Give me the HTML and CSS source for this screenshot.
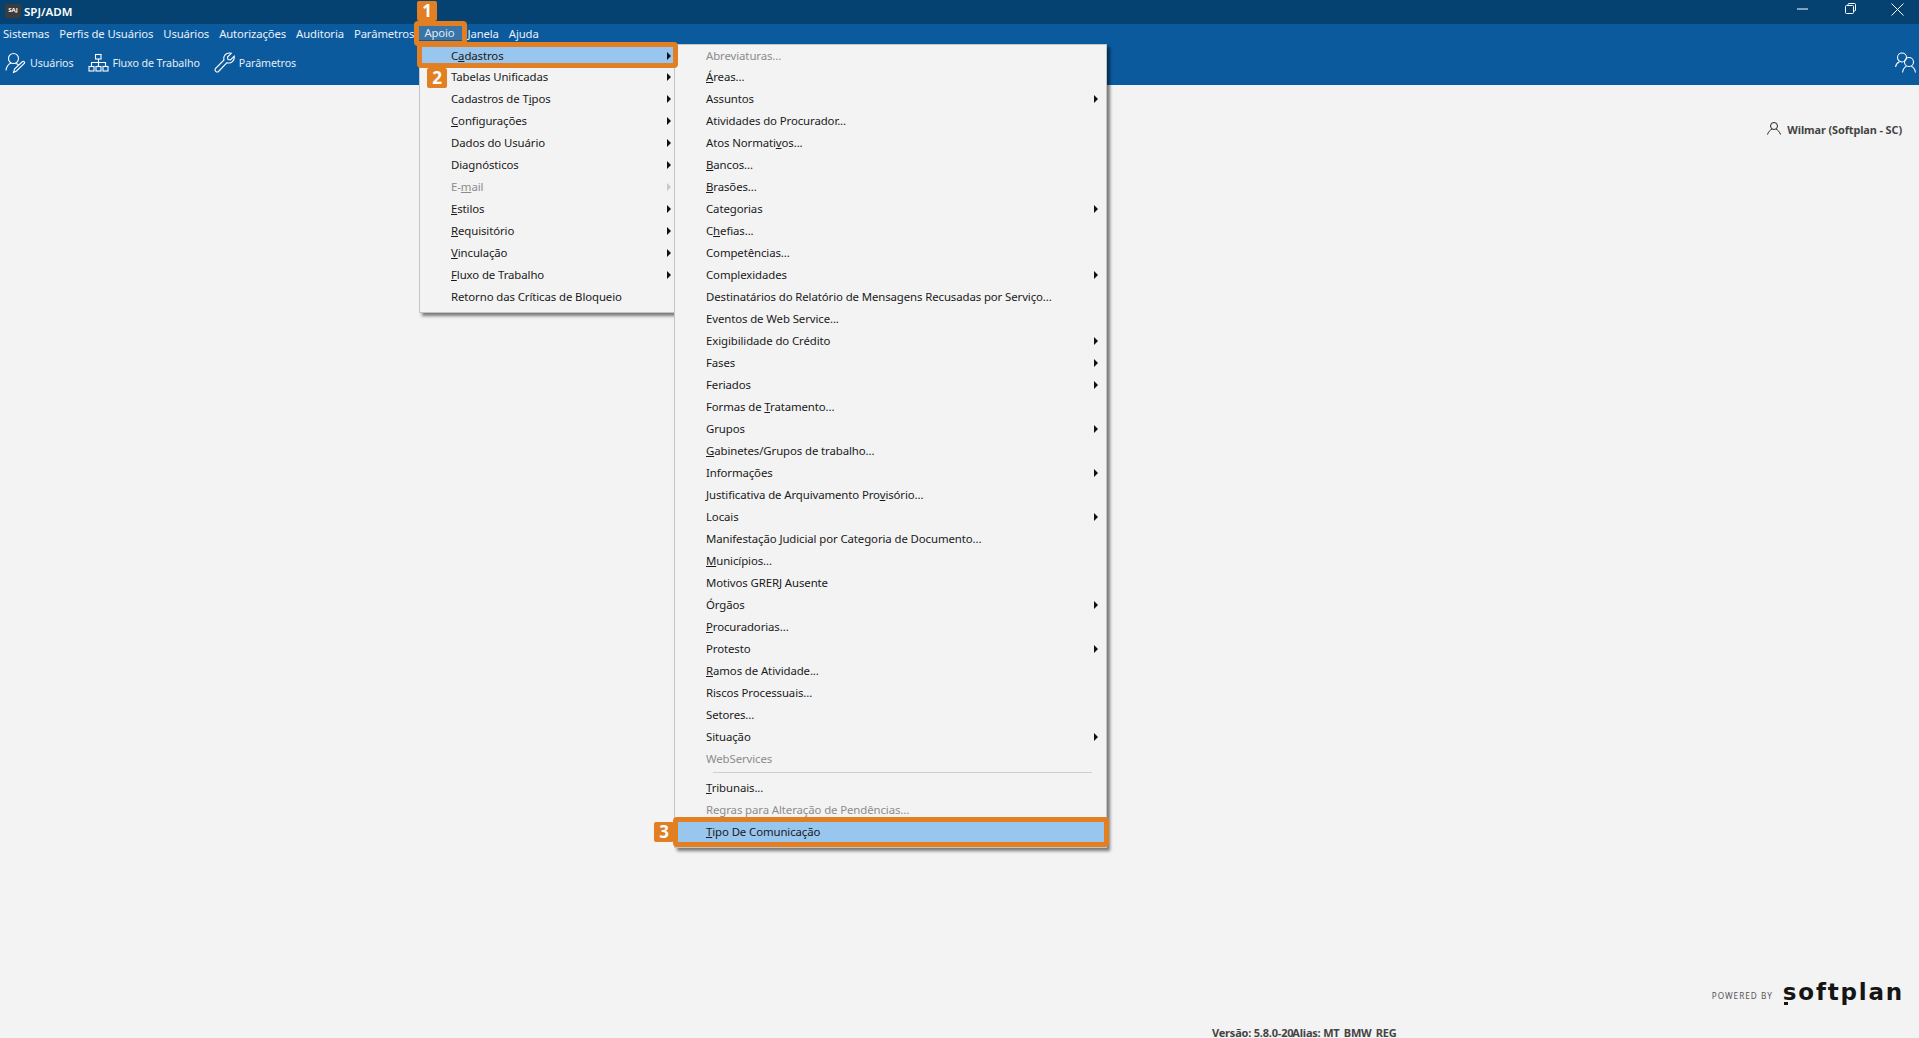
FILE: index.html
```html
<!DOCTYPE html>
<html lang="pt-BR">
<head>
<meta charset="utf-8">
<title>SPJ/ADM</title>
<link rel="stylesheet" href="styles.css">
</head>
<body>
<div class="app">
  <header class="titlebar">
    <div class="brand"><span class="saj">SAJ</span><span class="app-name">SPJ/ADM</span></div>
    <div class="winctl">
      <svg class="wc-min" width="11" height="2" viewBox="0 0 11 2"><path d="M0 1h11" stroke="#fff"/></svg>
      <svg class="wc-res" width="11" height="11" viewBox="0 0 11 11" fill="none" stroke="#fff"><rect x=".5" y="2.5" width="8" height="8" rx="1"/><path d="M3 2.5V1.500a1 1 0 0 1 1-1h5.500a1 1 0 0 1 1 1V7a1 1 0 0 1-1 1h-1"/></svg>
      <svg class="wc-close" width="13" height="13" viewBox="0 0 13 13" fill="none" stroke="#fff"><path d="M.5.5l12 12M12.500.5l-12 12"/></svg>
    </div>
  </header>
  <div class="band">
    <nav class="menubar">
      <span>Sistemas</span><span>Perfis de Usuários</span><span>Usuários</span><span>Autorizações</span><span>Auditoria</span><span>Parâmetros</span><span class="hover">Apoio</span><span>Janela</span><span>Ajuda</span>
    </nav>
    <div class="toolbar">
      <div class="tool">
        <svg width="21" height="21" viewBox="0 0 21 21" fill="none" stroke="#fff" stroke-width="1.100"><circle cx="8.500" cy="6.500" r="5"/><path d="M1 18.500c.5-4 2.500-6.500 5-7.500M10.500 11.500c1.500.2 2.500.8 3 1.500"/><path d="M8.500 20.500l1-3.500 8-7.500c1-.8 2.700.8 1.800 2l-7.800 7.500z"/></svg>
        <span>Usuários</span>
      </div>
      <div class="tool">
        <svg width="21" height="21" viewBox="0 0 21 21" fill="none" stroke="#fff" stroke-width="1.100"><rect x="7.500" y="2.500" width="5.500" height="4.500"/><rect x="1" y="14.500" width="5" height="4.500"/><rect x="8" y="14.500" width="5" height="4.500"/><rect x="15" y="14.500" width="5" height="4.500"/><path d="M10.500 7v7.500M3.500 14.500V10.500h14v4"/></svg>
        <span>Fluxo de Trabalho</span>
      </div>
      <div class="tool">
        <svg width="21" height="21" viewBox="0 0 21 21" fill="none" stroke="#fff" stroke-width="1.100"><path d="M1.500 16.500L10 8c-1-3.500 1.500-7 5.500-7 .7 0 1.300.1 1.800.3L13.500 5l.5 2.500 2.500.5 3.700-3.800c.7 4.300-3 7.800-7.200 6.500L4.500 19.500c-1.800 1.500-4.500-1-3-3z"/></svg>
        <span>Parâmetros</span>
      </div>
      <svg class="tool-users" width="22" height="21" viewBox="0 0 22 21" fill="none" stroke="#fff" stroke-width="1.100"><circle cx="7" cy="5.500" r="4.500"/><path d="M.5 15c.5-2.500 2-4.500 4-5.300"/><circle cx="14" cy="10" r="4.500"/><path d="M7.500 20.500c.5-3 2.200-5.500 4-6.300M16.300 14.200c2 .8 3.700 3.300 4.200 6.300"/></svg>
    </div>
  </div>
  <main class="content">
    <div class="user">
      <svg class="user-icon" width="14" height="13" viewBox="0 0 14 13" fill="none" stroke="#222"><circle cx="7" cy="4" r="3.500"/><path d="M.5 12.500c.8-2.500 2.500-4.500 4.300-5.200M9.200 7.300c1.800.7 3.500 2.700 4.300 5.200"/></svg>
      <span>Wilmar (Softplan - SC)</span>
    </div>
    <div class="powered">
      <span class="powered-by">POWERED BY</span>
      <span class="softplan">softplan</span>
    </div>
    <div class="version">Versão: 5.8.0-20<span class="alias">Alias: MT_BMW_REG</span></div>
  </main>
</div>

<ul class="menu menu-1">
  <li class="sel sub">C<u>a</u>dastros</li>
  <li class="sub">Tabelas Unificadas</li>
  <li class="sub">Cadastros de T<u>i</u>pos</li>
  <li class="sub"><u>C</u>onfigurações</li>
  <li class="sub">Dados do Usuário</li>
  <li class="sub">Diagnósticos</li>
  <li class="sub off">E-<u>m</u>ail</li>
  <li class="sub"><u>E</u>stilos</li>
  <li class="sub"><u>R</u>equisitório</li>
  <li class="sub"><u>V</u>inculação</li>
  <li class="sub"><u>F</u>luxo de Trabalho</li>
  <li>Retorno das Críticas de Bloqueio</li>
</ul>

<ul class="menu menu-2">
  <li class="off">Abreviaturas...</li>
  <li><u>Á</u>reas...</li>
  <li class="sub">Assuntos</li>
  <li>Atividades do Procurador...</li>
  <li>Atos Normati<u>v</u>os...</li>
  <li><u>B</u>ancos...</li>
  <li><u>B</u>rasões...</li>
  <li class="sub">Categorias</li>
  <li>C<u>h</u>efias...</li>
  <li>Competências...</li>
  <li class="sub">Complexidades</li>
  <li>Destinatários do Relatório de Mensagens Recusadas por Serviço...</li>
  <li>Eventos de Web Service...</li>
  <li class="sub">Exigibilidade do Crédito</li>
  <li class="sub">Fases</li>
  <li class="sub">Feriados</li>
  <li>Formas de <u>T</u>ratamento...</li>
  <li class="sub">Grupos</li>
  <li><u>G</u>abinetes/Grupos de trabalho...</li>
  <li class="sub">Informações</li>
  <li>Justificativa de Arquivamento Pro<u>v</u>isório...</li>
  <li class="sub">Locais</li>
  <li>Manifestação Judicial por Categoria de Documento...</li>
  <li><u>M</u>unicípios...</li>
  <li>Motivos GRERJ Ausente</li>
  <li class="sub">Órgãos</li>
  <li><u>P</u>rocuradorias...</li>
  <li class="sub">Protesto</li>
  <li><u>R</u>amos de Atividade...</li>
  <li>Riscos Processuais...</li>
  <li>Setores...</li>
  <li class="sub">Situação</li>
  <li class="off">WebServices</li>
  <li class="sep"></li>
  <li><u>T</u>ribunais...</li>
  <li class="off">Regras para Alteração de Pendências...</li>
  <li class="sel"><u>T</u>ipo De Comunicação</li>
</ul>

<div class="mark mark-apoio"></div>
<div class="mark mark-cad"></div>
<div class="mark mark-tipo"></div>
<div class="badge badge-1">1</div>
<div class="badge badge-2">2</div>
<div class="badge badge-3">3</div>
</body>
</html>
```
FILE: styles.css
```css
* { box-sizing: border-box; }
html, body { margin: 0; height: 100%; overflow: hidden; }
body {
  font-family: "Noto Sans", "Open Sans", sans-serif;
  font-size: 11.4px;
  letter-spacing: -.1px;
  color: #1a1a1a;
  background: #f3f3f3;
}
.app { display: flex; flex-direction: column; height: 1038px; overflow: hidden; }

.titlebar {
  height: 24px;
  background: #054272;
  display: flex;
  align-items: center;
  justify-content: space-between;
  color: #fff;
}
.brand { display: flex; align-items: center; padding: 0 0 2px 5px; gap: 3px; }
.saj {
  width: 16px; height: 14px;
  background: #3c3c3c;
  color: #fff;
  font-size: 6px;
  font-weight: 700;
  line-height: 12px;
  text-align: center;
  border-radius: 2px;
}
.app-name { font-size: 11.500px; font-weight: 600; letter-spacing: 0; }
.winctl { display: flex; align-items: center; padding-right: 15px; }
.wc-min { margin-right: 37px; margin-top: -7px; }
.wc-res { margin-right: 35px; margin-top: -8px; }
.wc-close { margin-top: -6px; }

.band { height: 61px; background: #0b5a9e; color: #fff; display: flex; flex-direction: column; }
.menubar { height: 18px; display: flex; align-items: center; padding-left: 3px; gap: 10px; color: #e8f0f8; font-size: 11.300px; letter-spacing: -.12px; }
.menubar .hover { background: #3a74a6; color: #dfe9f3; padding: 0 8px 0 5px; margin: 0 -5px 0 -5px; height: 14px; line-height: 14px; }
.toolbar { flex: 1; display: flex; align-items: center; padding: 0 2px 2px 5px; gap: 14px; font-size: 10.700px; }
.tool { display: flex; align-items: center; gap: 4px; color: #e3edf6; }
.tool-users { margin-left: auto; }

.content { flex: 1; position: relative; display: flex; flex-direction: column; align-items: stretch; min-height: 0; }
.user {
  display: flex; align-items: center; justify-content: flex-end; gap: 6px;
  padding: 37px 17px 0 0;
  font-size: 10.900px; font-weight: 700; color: #444;
}
.user-icon { margin-top: -3px; }
.powered {
  margin-top: auto;
  display: flex; align-items: center; justify-content: flex-end; gap: 10px;
  padding-right: 15px;
}
.powered-by { font-size: 8.200px; letter-spacing: 1px; color: #555; margin-top: 7px; }
.softplan {
  position: relative;
  font-family: "DejaVu Sans", sans-serif;
  font-size: 23px; font-weight: 700;
  color: #151515;
  line-height: 30px;
  letter-spacing: 1.800px;
}
.softplan::after {
  content: "";
  position: absolute;
  left: 1px; bottom: 2px;
  width: 4px; height: 3px;
  background: #151515;
}
.version { margin: 18px 0 -3px 1212px; font-size: 11px; font-weight: 700; color: #444; white-space: nowrap; height: 16px; line-height: 16px; letter-spacing: -.2px; }
.alias { margin-left: -1px; }

.menu {
  position: absolute;
  margin: 0;
  padding: 0 0 4px;
  list-style: none;
  background: #f3f3f3;
  border: 1px solid #c4c4c4;
  box-shadow: 3px 3px 3px rgba(0, 0, 0, .5);
}
.menu li { position: relative; height: 22px; line-height: 22px; white-space: nowrap; }
.menu li:first-child { height: 21px; }
.menu-1 { left: 419px; top: 44px; width: 256px; }
.menu-1 li { padding-left: 31px; }
.menu-2 { left: 674px; top: 44px; width: 433px; }
.menu-2 li { padding-left: 31px; }
.menu-1 li.sub::after, .menu-2 li.sub::after {
  content: "";
  position: absolute;
  top: 7px;
  border-left: 4px solid #111;
  border-top: 4px solid transparent;
  border-bottom: 4px solid transparent;
}
.menu-1 li.sub::after { right: 3px; }
.menu-2 li.sub::after { right: 8px; }
.menu li.off { color: #8c8c8c; }
.menu li.off::after { border-left-color: #c8c8c8; }
.menu li.sel { background: #98c6ee; }
.menu li.sep { height: 7px; padding: 0; }
.menu li.sep::before {
  content: "";
  position: absolute;
  left: 38px; right: 14px; top: 2px;
  border-top: 1px solid #cfcfcf;
}

.mark { position: absolute; border: 5px solid #e17f22; border-radius: 4px; }
.mark-apoio { left: 414px; top: 21px; width: 53px; height: 25px; }
.mark-cad { left: 417px; top: 42px; width: 261px; height: 26px; }
.mark-tipo { left: 673px; top: 817px; width: 436px; height: 30px; }
.badge {
  position: absolute;
  width: 20px; height: 20px;
  background: #e17f22;
  color: #fff;
  font-size: 17px; font-weight: 700;
  line-height: 20px;
  text-align: center;
  border-radius: 2px;
  letter-spacing: 0;
}
.badge-1 { left: 417px; top: 1px; }
.badge-2 { left: 427px; top: 68px; }
.badge-3 { left: 654px; top: 822px; }
```
